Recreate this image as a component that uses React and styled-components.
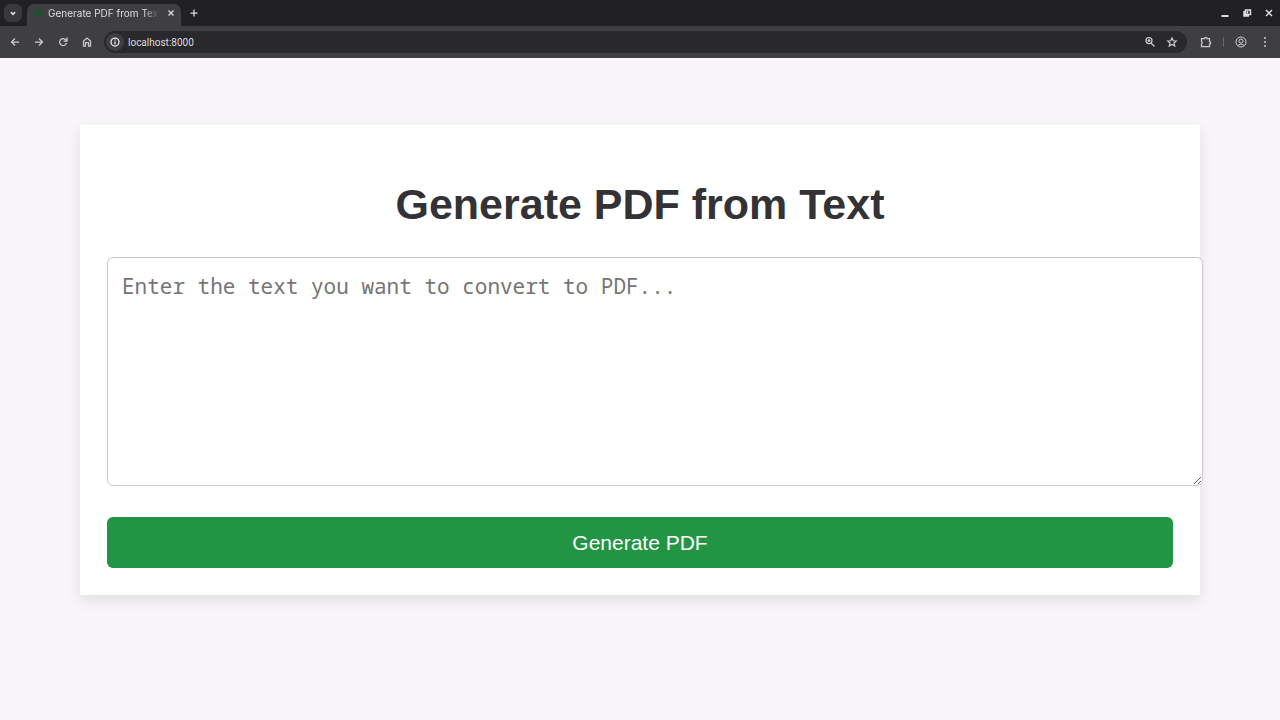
import React, { useState } from "react";
import styled, { createGlobalStyle } from "styled-components";

const GlobalStyle = createGlobalStyle`
  body {
    margin: 0;
    background-color: #f8f6f9;
    font-family: "Liberation Sans", Arial, sans-serif;
  }
`;

const Wrapper = styled.div`
  display: flex;
  flex-direction: column;
  min-height: 100vh;
`;

const Browser = styled.header`
  background-color: #212023;
  color: #dddcdf;
  font-family: Inter, sans-serif;
  font-size: 10px;
`;

const TabStrip = styled.div`
  display: flex;
  align-items: center;
  height: 26px;
  padding: 0 0 0 4px;
`;

const IconButton = styled.button`
  display: flex;
  align-items: center;
  justify-content: center;
  flex-shrink: 0;
  width: ${props => props.width || "24px"};
  height: 18px;
  padding: 0;
  border: 0;
  border-radius: 6px;
  color: inherit;
  background-color: ${props => (props.filled ? "#39383b" : "transparent")};
  cursor: pointer;
`;

const TabItem = styled.div`
  display: flex;
  align-items: center;
  box-sizing: border-box;
  width: 154px;
  height: 22px;
  margin: 4px 0 0 5px;
  padding: 0 1px 4px 6px;
  border-radius: 7px 7px 0 0;
  background-color: #3f3e41;
`;

const TabTitle = styled.span`
  flex: 1;
  min-width: 0;
  margin-left: 5px;
  overflow: hidden;
  line-height: 16px;
  white-space: nowrap;
  mask-image: linear-gradient(to right, #000 84%, transparent 98%);
`;

const Toolbar = styled.nav`
  display: flex;
  align-items: center;
  height: 32px;
  padding: 0 3px;
  background-color: #3f3e41;
  color: #cbcacd;
`;

const AddressBar = styled.div`
  display: flex;
  align-items: center;
  flex: 1;
  height: 22px;
  margin: 0 7px 0 5px;
  padding: 0 4px 0 2px;
  border-radius: 11px;
  background-color: #29282b;
`;

const SiteInfo = styled(IconButton)`
  width: 18px;
  border-radius: 9px;
  background-color: #3f3e41;
  color: #eeedf0;
`;

const Address = styled.input`
  flex: 1;
  min-width: 0;
  padding: 0 0 0 4px;
  border: 0;
  outline: none;
  color: #dddcdf;
  background: transparent;
  font-family: Roboto, sans-serif;
  font-size: 10px;
`;

const Divider = styled.span`
  width: 1px;
  height: 10px;
  margin: 0 5px;
  background-color: #66656a;
`;

const WindowButtons = styled.div`
  display: flex;
  margin-left: auto;
`;

const Main = styled.main`
  padding: 67px 80px;
`;

const Card = styled.form`
  padding: 27px;
  background-color: #fff;
  box-shadow: 0 5px 13px rgba(0, 0, 0, 0.1);
`;

const Title = styled.h1`
  margin: 28px 0;
  color: #333236;
  font-size: 43px;
  line-height: 49px;
  text-align: center;
`;

/* content-box on purpose: the padding hangs over the card's edge */
const TextBox = styled.textarea`
  display: block;
  width: 100%;
  height: 199px;
  margin: 0 0 31px;
  padding: 14px;
  border: 1px solid #c9c8cb;
  border-radius: 6px;
  background-color: #fff;
  color: #333;
  font-family: "Noto Sans Mono", "DejaVu Sans Mono", monospace;
  font-size: 21px;
  line-height: 29px;

  &::placeholder {
    color: #757575;
  }
`;

const Submit = styled.button`
  display: block;
  width: 100%;
  padding: 13px;
  border: 0;
  border-radius: 6px;
  background-color: #219544;
  color: #fff;
  font-family: inherit;
  font-size: 21px;
  line-height: 25px;
  cursor: pointer;
`;

const Icon = ({ size = 12, children, weight = 2 }) => (
  <svg
    width={size}
    height={size}
    viewBox="0 0 24 24"
    fill="none"
    stroke="currentColor"
    strokeWidth={weight}
    aria-hidden="true"
  >
    {children}
  </svg>
);

const Favicon = () => (
  <svg width="10" height="10" viewBox="0 0 10 10" aria-hidden="true">
    <path d="M4 1h5L7 8H1z" fill="#17542c" />
  </svg>
);

export default () => {
  const [text, setText] = useState("");

  return (
    <Wrapper>
      <GlobalStyle />
      <Browser>
        {/* tabs and window buttons */}
        <TabStrip>
          <IconButton filled width="18px" aria-label="Search tabs">
            <Icon size={10} weight={4}>
              <path d="M7 10l5 5 5-5" />
            </Icon>
          </IconButton>
          <TabItem>
            <Favicon />
            <TabTitle>Generate PDF from Text</TabTitle>
            <IconButton width="18px" aria-label="Close tab">
              <Icon size={10} weight={3}>
                <path d="M6 6l12 12M18 6L6 18" />
              </Icon>
            </IconButton>
          </TabItem>
          <IconButton width="26px" aria-label="New tab">
            <Icon size={12} weight={2.5}>
              <path d="M12 5v14M5 12h14" />
            </Icon>
          </IconButton>
          <WindowButtons>
            <IconButton width="22px" aria-label="Minimize">
              <Icon size={12} weight={4}>
                <path d="M5 18h14" />
              </Icon>
            </IconButton>
            <IconButton width="22px" aria-label="Restore">
              <Icon size={12} weight={3}>
                <path d="M9 6h10v9H9zM6 8v10h10M13 8v5" />
              </Icon>
            </IconButton>
            <IconButton width="22px" aria-label="Close">
              <Icon size={12} weight={3}>
                <path d="M6 6l12 12M18 6L6 18" />
              </Icon>
            </IconButton>
          </WindowButtons>
        </TabStrip>

        {/* navigation and address */}
        <Toolbar>
          <IconButton aria-label="Back">
            <Icon weight={2.5}>
              <path d="M20 12H5M12 5l-7 7 7 7" />
            </Icon>
          </IconButton>
          <IconButton aria-label="Forward">
            <Icon weight={2.5}>
              <path d="M4 12h15M12 5l7 7-7 7" />
            </Icon>
          </IconButton>
          <IconButton aria-label="Reload">
            <Icon weight={2.5}>
              <path d="M19 14a7 7 0 1 1-2-7l3 3M20 3v7h-7" />
            </Icon>
          </IconButton>
          <IconButton aria-label="Home">
            <Icon weight={2.5}>
              <path d="M5 20V10l7-6 7 6v10h-4v-7H9v7z" />
            </Icon>
          </IconButton>
          <AddressBar>
            <SiteInfo type="button" aria-label="Site information">
              <Icon weight={2.5}>
                <circle cx="12" cy="12" r="8" />
                <path d="M12 11v6M12 7v2" />
              </Icon>
            </SiteInfo>
            <Address aria-label="Address" defaultValue="localhost:8000" />
            <IconButton width="22px" aria-label="Zoom">
              <Icon weight={2.5}>
                <circle cx="10" cy="9" r="6" />
                <path d="M14 14l7 7M10 6v6M7 9h6" />
              </Icon>
            </IconButton>
            <IconButton width="22px" aria-label="Bookmark">
              <Icon weight={2.5}>
                <path d="M12 4l2.500 5.500 6 .5-4.500 4 1.400 6-5.400-3.200L6.600 20 8 14 3.500 10l6-.5z" />
              </Icon>
            </IconButton>
          </AddressBar>
          <IconButton aria-label="Extensions">
            <Icon weight={2.5}>
              <path d="M3 5h6a2 2 0 0 1 5 0h5v6a2 2 0 0 1 0 5v5H3v-5a3 3 0 0 0 0-5z" />
            </Icon>
          </IconButton>
          <Divider />
          <IconButton aria-label="Profile">
            <Icon>
              <circle cx="12" cy="12" r="10" />
              <circle cx="12" cy="10" r="4" />
              <path d="M5 19q7-6 14 0" />
            </Icon>
          </IconButton>
          <IconButton aria-label="Menu">
            <Icon>
              <g fill="currentColor" stroke="none">
                <circle cx="12" cy="4" r="2" />
                <circle cx="12" cy="12" r="2" />
                <circle cx="12" cy="20" r="2" />
              </g>
            </Icon>
          </IconButton>
        </Toolbar>
      </Browser>

      <Main>
        <Card onSubmit={e => e.preventDefault()}>
          <Title>Generate PDF from Text</Title>
          <TextBox
            aria-label="Text to convert"
            placeholder="Enter the text you want to convert to PDF..."
            value={text}
            onChange={e => setText(e.target.value)}
          />
          <Submit type="submit">Generate PDF</Submit>
        </Card>
      </Main>
    </Wrapper>
  );
};
